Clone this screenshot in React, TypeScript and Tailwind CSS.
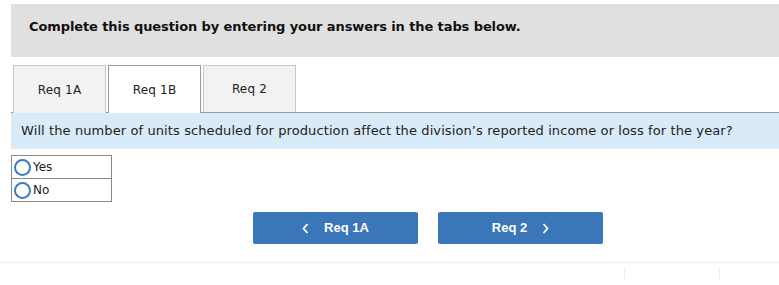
import React from "react";

const verdana = { fontFamily: '"DejaVu Sans", Verdana, sans-serif' };

function Radio({ label }: { label: string }) {
  return (
    <div className="flex h-[22px] items-center pl-[2px]">
      <span className="box-border block h-[17px] w-[17px] rounded-full border-2 border-[#3b7ac0] bg-white" />
      <span className="ml-[2px] text-[12px] leading-none text-[#222]" style={verdana}>
        {label}
      </span>
    </div>
  );
}

export default function App() {
  return (
    <div className="relative h-[285px] w-[779px] overflow-hidden bg-white">
      <div className="pl-[11px] pt-[4px]">
        <div
          className="h-[53px] bg-[#e0e0e0] pl-[18px] pt-[15px] text-[13px] font-bold leading-[16px] tracking-[-0.1px] text-[#111]"
          style={verdana}
        >
          Complete this question by entering your answers in the tabs below.
        </div>

        <div className="mt-[8px] flex h-[48px] items-end gap-[2px] border-b border-[#999] pl-[2px]">
          <div className="-mb-px box-border flex h-[48px] w-[93px] items-center justify-center border border-b-0 border-[#c8c8c8] bg-[#f2f2f2] text-[12px] tracking-[0.2px] text-[#222]" style={verdana}>
            Req 1A
          </div>
          <div className="-mb-px box-border flex h-[48px] w-[93px] items-center justify-center border border-b-0 border-[#999] bg-white text-[12px] tracking-[0.2px] text-[#222]" style={verdana}>
            Req 1B
          </div>
          <div className="-mb-px box-border flex h-[47px] w-[93px] items-center justify-center self-start border border-b-0 border-[#c8c8c8] bg-[#f2f2f2] text-[12px] tracking-[0.2px] text-[#222]" style={verdana}>
            Req 2
          </div>
        </div>

        <div
          className="flex h-[36px] items-center bg-[#d9eaf8] pl-[10px] text-[13px] tracking-[0.1px] text-[#222]"
          style={verdana}
        >
          Will the number of units scheduled for production affect the division’s reported income or loss for the year?
        </div>

        <div className="mt-[6px] box-border w-[101px] border border-[#888]">
          <Radio label="Yes" />
          <div className="border-t border-[#888]">
            <Radio label="No" />
          </div>
        </div>

        <div className="mt-[10px] flex gap-[20px] pl-[242px]">
          <button
            className="flex h-[32px] w-[165px] items-center justify-center rounded-[2px] bg-[#3a76b8] text-[13px] font-bold text-white"
            style={{ fontFamily: '"Liberation Sans", Arial, sans-serif' }}
          >
            <svg width="7" height="11" viewBox="0 0 7 11" className="mr-[15px]">
              <path d="M5.5 1 L1.5 5.5 L5.5 10" stroke="white" strokeWidth="1.8" fill="none" />
            </svg>
            Req 1A
          </button>
          <button
            className="flex h-[32px] w-[165px] items-center justify-center rounded-[2px] bg-[#3a76b8] text-[13px] font-bold text-white"
            style={{ fontFamily: '"Liberation Sans", Arial, sans-serif' }}
          >
            Req 2
            <svg width="7" height="11" viewBox="0 0 7 11" className="ml-[15px]">
              <path d="M1.5 1 L5.5 5.5 L1.5 10" stroke="white" strokeWidth="1.8" fill="none" />
            </svg>
          </button>
        </div>
      </div>

      <div className="mt-[18px] border-t border-[#eeeeee]" />
      <div className="flex h-[17px] pt-[5px]">
        <div className="ml-[624px] h-full w-px bg-[#eeeeee]" />
        <div className="ml-[94px] h-full w-px bg-[#eeeeee]" />
      </div>
    </div>
  );
}
